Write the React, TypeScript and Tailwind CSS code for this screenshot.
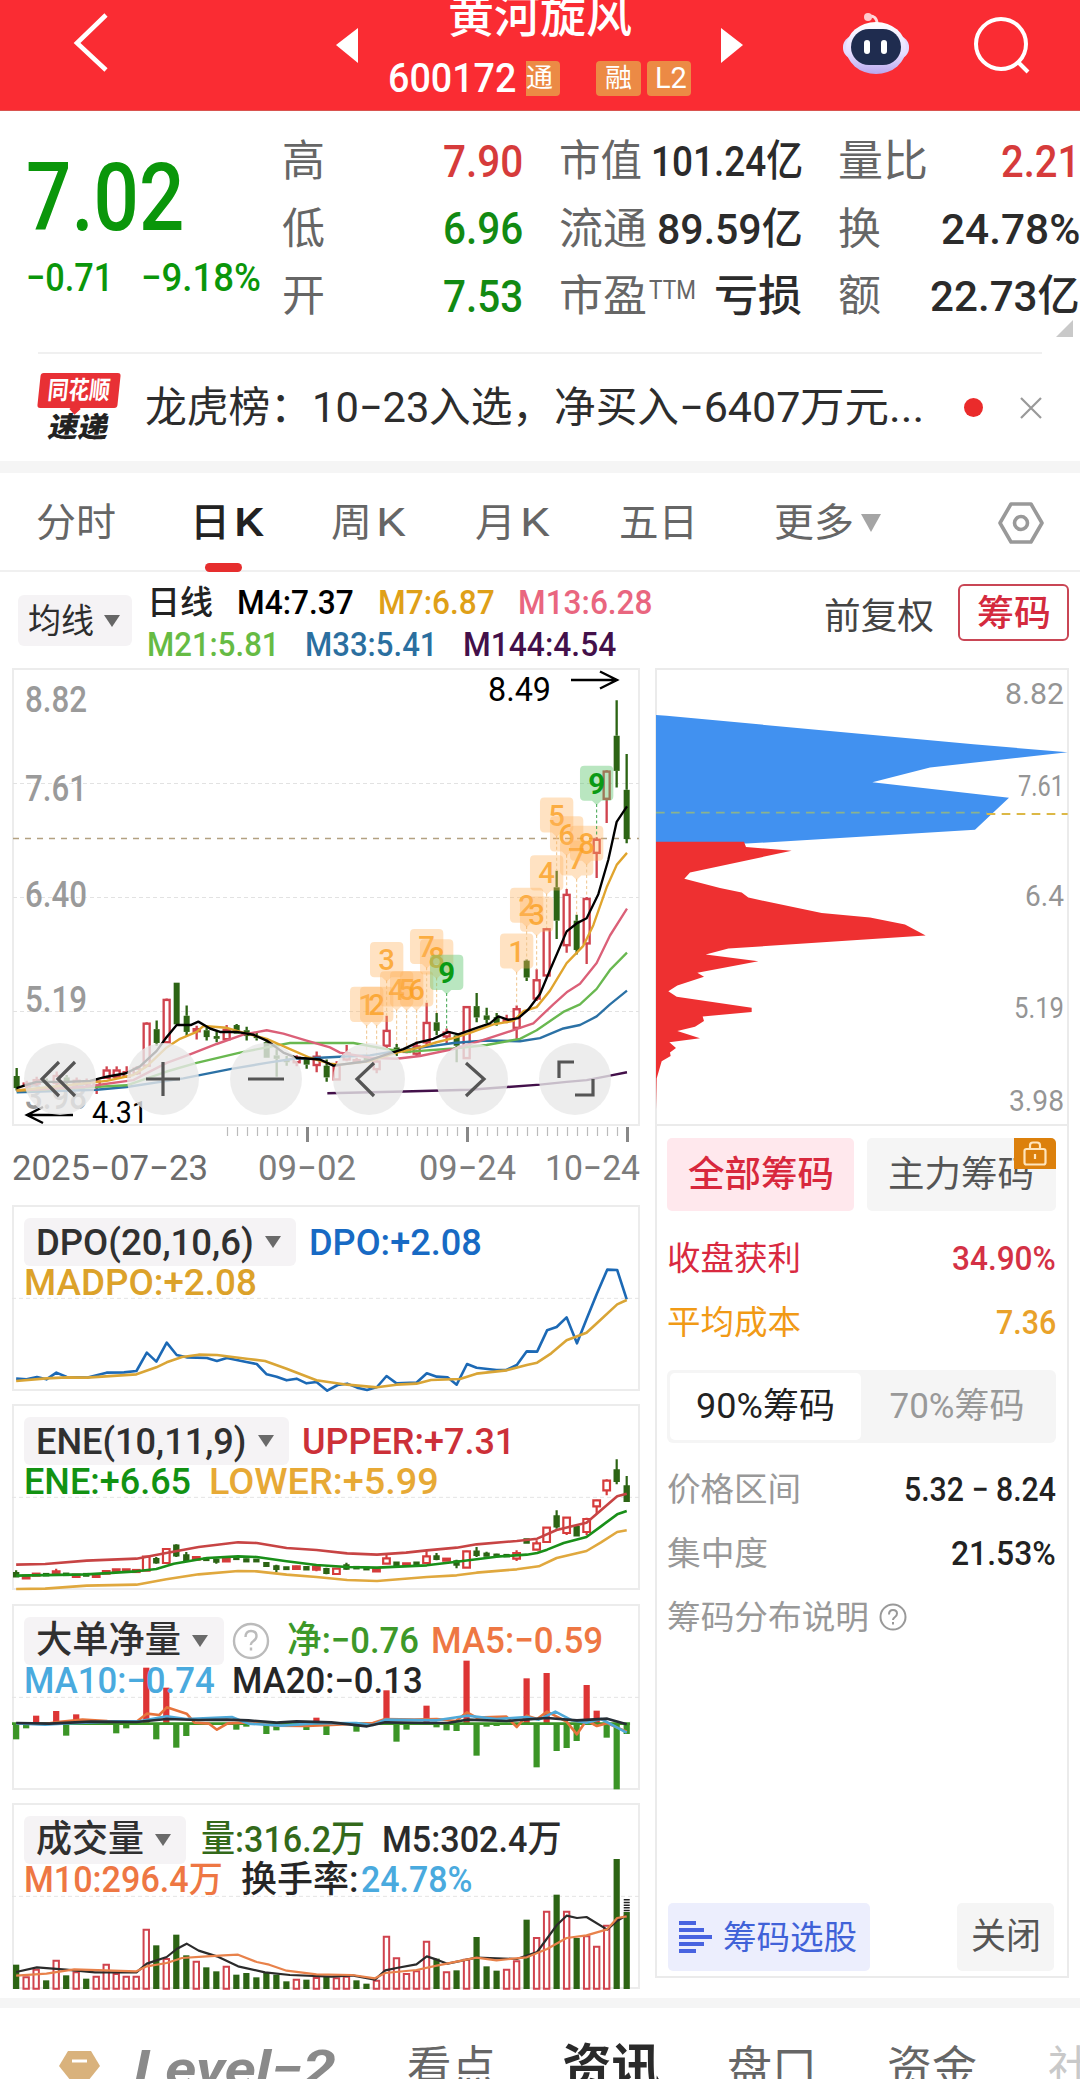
import React, { useLayoutEffect, useRef, useState } from "react";

const GREEN = "#2c6414";
const RED = "#d0434e";

/** Text condensed or stretched horizontally to an exact width. */
function Fit({ w, className = "", children }: { w: number; className?: string; children: React.ReactNode }) {
  const ref = useRef<HTMLSpanElement>(null);
  const [s, setS] = useState(1);
  useLayoutEffect(() => {
    if (ref.current) setS(w / ref.current.offsetWidth);
  }, [w]);
  return (
    <span className={"block shrink-0 leading-none " + className} style={{ width: w }}>
      <span ref={ref} className="inline-block origin-left whitespace-nowrap" style={{ transform: `scaleX(${s})` }}>
        {children}
      </span>
    </span>
  );
}

function Header() {
  return (
    <header className="flex h-[111px] shrink-0 overflow-hidden border-b border-[#d9534f] bg-[#fa2c33] text-white">
      <svg className="ml-[72px] mt-[10px] h-[64px] w-[40px]" viewBox="0 0 40 64" fill="none" stroke="white" strokeWidth="4.6">
        <path d="M34 5 5 33l29 27" />
      </svg>
      <svg className="ml-[224px] mt-[28px] h-[35px] w-[22px]" viewBox="0 0 22 35" fill="white">
        <path d="M22 0v35L0 17z" />
      </svg>
      <div className="ml-[28px] w-[308px]">
        <div className="-mt-[9px] flex h-[50px] items-center pl-[62px]">
          <Fit w={184} className="text-[46px] font-medium">黄河旋风</Fit>
        </div>
        <div className="mt-[19px] flex h-[36px] items-center">
          <Fit w={128} className="ml-[2px] mt-[2px] text-[40px] font-medium">600172</Fit>
          <div className="ml-[10px] flex h-[35px] w-[34px] items-center rounded-r-[4px] bg-[#ec8a45]">
            <Fit w={27} className="text-[26px]">通</Fit>
          </div>
          <div className="ml-[36px] flex h-[35px] w-[45px] items-center justify-center rounded-[4px] bg-[#ec8a45]">
            <Fit w={27} className="text-[26px]">融</Fit>
          </div>
          <div className="ml-[6px] flex h-[35px] w-[44px] items-center justify-center rounded-[4px] bg-[#ec8a45]">
            <Fit w={32} className="ml-1 text-[29px]">L2</Fit>
          </div>
        </div>
      </div>
      <svg className="ml-[27px] mt-[28px] h-[35px] w-[22px]" viewBox="0 0 22 35" fill="white">
        <path d="M0 0v35l22-18z" />
      </svg>
      <svg className="ml-[99px] mt-[12px] h-[64px] w-[68px]" viewBox="0 0 68 64">
        <defs>
          <linearGradient id="shell" x1="0" y1="0" x2="0" y2="1">
            <stop offset="0" stopColor="#ffffff" />
            <stop offset="0.6" stopColor="#e6ddff" />
            <stop offset="1" stopColor="#b9a7ee" />
          </linearGradient>
        </defs>
        <path d="M26 4q9-1 9 8" fill="none" stroke="#ffd9dc" strokeWidth="3" />
        <circle cx="26" cy="5" r="4" fill="#ffc9cd" />
        <rect x="1" y="24" width="66" height="23" rx="11" fill="#e4dbff" />
        <ellipse cx="34" cy="36" rx="30" ry="26" fill="url(#shell)" />
        <rect x="9" y="17" width="50" height="36" rx="18" fill="#1f2c4f" />
        <rect x="22" y="28" width="6" height="14" rx="3" fill="white" />
        <rect x="39" y="28" width="6" height="14" rx="3" fill="white" />
      </svg>
      <svg className="ml-[63px] mt-[15px] h-[60px] w-[60px]" viewBox="0 0 60 60" fill="none" stroke="white" strokeWidth="4">
        <circle cx="28" cy="29" r="25" />
        <path d="m45 47 10 10" />
      </svg>
    </header>
  );
}

function Quote() {
  const lab = "text-[43px] text-[#666]";
  const val = "text-[43px] font-medium text-[#2b2b2b]";
  return (
    <section className="relative flex h-[241px] shrink-0">
      <div className="ml-[26px] w-[256px] text-[#0a960a]">
        <div className="mt-[40px] flex h-[94px] items-center">
          <Fit w={158} className="text-[94px] font-medium">7.02</Fit>
        </div>
        <div className="mt-[13px] flex h-[40px] items-center">
          <Fit w={87} className="text-[39px] font-medium">−0.71</Fit>
          <Fit w={120} className="ml-[28px] text-[39px] font-medium">−9.18%</Fit>
        </div>
      </div>
      <div className="mt-[17px] flex w-[241px] flex-col">
        {[["高", "7.90", "text-[#d63b3b]"], ["低", "6.96", "text-[#128a12]"], ["开", "7.53", "text-[#128a12]"]].map(([a, b, c]) => (
          <div key={a} className="flex h-[67.5px] items-center justify-between">
            <Fit w={43} className={lab}>{a}</Fit>
            <Fit w={80} className={"text-[44px] font-medium " + c}>{b}</Fit>
          </div>
        ))}
      </div>
      <div className="ml-[36px] mt-[17px] flex w-[244px] flex-col">
        <div className="flex h-[67.5px] items-center justify-between">
          <Fit w={83} className={lab}>市值</Fit><Fit w={152} className={val}>101.24亿</Fit>
        </div>
        <div className="flex h-[67.5px] items-center justify-between">
          <Fit w={88} className={lab}>流通</Fit><Fit w={146} className={val}>89.59亿</Fit>
        </div>
        <div className="flex h-[67.5px] items-center">
          <Fit w={88} className={lab}>市盈</Fit>
          <Fit w={47} className="-mt-3 ml-[2px] text-[25px] text-[#666]">TTM</Fit>
          <Fit w={88} className={"ml-[18px] " + val}>亏损</Fit>
        </div>
      </div>
      <div className="ml-[35px] mt-[17px] flex w-[242px] flex-col">
        <div className="flex h-[67.5px] items-center justify-between">
          <Fit w={90} className={lab}>量比</Fit><Fit w={79} className="text-[44px] font-medium text-[#d63b3b]">2.21</Fit>
        </div>
        <div className="flex h-[67.5px] items-center justify-between">
          <Fit w={43} className={lab}>换</Fit><Fit w={139} className={val}>24.78%</Fit>
        </div>
        <div className="flex h-[67.5px] items-center justify-between">
          <Fit w={43} className={lab}>额</Fit><Fit w={150} className={val}>22.73亿</Fit>
        </div>
      </div>
      <svg className="absolute bottom-[15px] right-[7px] h-[17px] w-[17px]" viewBox="0 0 17 17" fill="#c9c9c9">
        <path d="M17 0v17H0z" />
      </svg>
    </section>
  );
}

function News() {
  return (
    <section className="mx-[38px] flex h-[109px] shrink-0 items-center border-t-2 border-[#f0f0f0]">
      <div className="flex h-[70px] w-[82px] flex-col items-center">
        <div className="relative flex h-[35px] w-[80px] -skew-x-6 items-center justify-center rounded-[3px] bg-[#e83035] text-white">
          <Fit w={62} className="text-[25px] font-bold">同花顺</Fit>
          <div className="absolute left-[34px] top-[32px] h-[8px] w-[8px] rotate-45 bg-[#e83035]" />
        </div>
        <Fit w={60} className="mt-[6px] -skew-x-12 text-[28px] font-black text-[#222]">速递</Fit>
      </div>
      <div className="ml-[25px] flex text-[42px] text-[#2d2d2d]">
        <Fit w={167}>龙虎榜：</Fit>
        <Fit w={117}>10−23</Fit>
        <Fit w={125}>入选，</Fit>
        <Fit w={125}>净买入</Fit>
        <Fit w={121}>−6407</Fit>
        <Fit w={124}>万元...</Fit>
      </div>
      <span className="ml-[40px] h-[19px] w-[19px] rounded-full bg-[#ea2b2b]" />
      <svg className="ml-[37px] h-[22px] w-[22px]" viewBox="0 0 22 22" stroke="#999" strokeWidth="2.2">
        <path d="M1 1l20 20M21 1 1 21" />
      </svg>
    </section>
  );
}

function Tabs() {
  const t = "text-[39px] text-[#666]";
  return (
    <nav className="flex h-[99px] shrink-0 items-center border-b-2 border-[#f0f0f0] pt-[3px]">
      <Fit w={80} className={"ml-[36px] " + t}>分时</Fit>
      <div className="relative ml-[74px]">
        <div className="flex text-[39px] font-medium text-[#222]">
          <Fit w={40}>日</Fit>
          <Fit w={30} className="ml-[4px]">K</Fit>
        </div>
        <span className="absolute -bottom-[29px] left-[15px] h-[9px] w-[37px] rounded-full bg-[#e62e2e]" />
      </div>
      <Fit w={41} className={"ml-[67px] " + t}>周</Fit>
      <Fit w={29} className={"ml-[4px] " + t}>K</Fit>
      <Fit w={41} className={"ml-[70px] " + t}>月</Fit>
      <Fit w={29} className={"ml-[4px] " + t}>K</Fit>
      <Fit w={79} className={"ml-[70px] " + t}>五日</Fit>
      <Fit w={80} className={"ml-[76px] " + t}>更多</Fit>
      <svg className="ml-[7px] h-[18px] w-[20px]" viewBox="0 0 20 18" fill="#a5a5a5"><path d="M0 0h20L10 18z" /></svg>
      <svg className="ml-[117px] h-[44px] w-[46px]" viewBox="0 0 46 44" fill="none" stroke="#999" strokeWidth="3.6" strokeLinejoin="round">
        <path d="M13 3h20l11 19-11 19H13L2 22z" />
        <circle cx="23" cy="22" r="6.5" />
      </svg>
    </nav>
  );
}

function Averages() {
  return (
    <section className="flex h-[96px] shrink-0">
      <div className="ml-[18px] mt-[23px] flex h-[51px] w-[114px] items-center rounded-[6px] bg-[#f5f3f5]">
        <Fit w={66} className="ml-[10px] text-[34px] text-[#2d2d2d]">均线</Fit>
        <svg className="ml-[10px] h-[12px] w-[16px]" viewBox="0 0 16 12" fill="#666"><path d="M0 0h16L8 12z" /></svg>
      </div>
      <div className="ml-[15px] mt-[9px] w-[530px]">
        <div className="flex h-[42px] items-center text-[33px] font-medium">
          <Fit w={66} className="text-[#222]">日线</Fit>
          <Fit w={117} className="ml-[24px] text-black">M4:7.37</Fit>
          <Fit w={117} className="ml-[24px] text-[#dfa018]">M7:6.87</Fit>
          <Fit w={135} className="ml-[23px] text-[#e9667f]">M13:6.28</Fit>
        </div>
        <div className="flex h-[42px] items-center text-[33px] font-medium">
          <Fit w={133} className="text-[#66bb44]">M21:5.81</Fit>
          <Fit w={133} className="ml-[25px] text-[#2b6f9f]">M33:5.41</Fit>
          <Fit w={153} className="ml-[25px] text-[#43104a]">M144:4.54</Fit>
        </div>
      </div>
      <Fit w={110} className="ml-[147px] mt-[27px] text-[36px] text-[#444]">前复权</Fit>
      <div className="ml-[24px] mt-[12px] flex h-[57px] w-[111px] items-center justify-center rounded-[6px] border-2 border-[#c94655]">
        <Fit w={74} className="mt-[2px] text-[36px] font-medium text-[#d42a3e]">筹码</Fit>
      </div>
    </section>
  );
}

type Candle = [number, number, number, number, "r" | "g"];
const candles: Candle[] = [
  [1185, 1208, 1243, 1250, "g"], [1222, 1228, 1238, 1245, "r"], [1210, 1218, 1232, 1236, "r"], [1215, 1222, 1230, 1236, "g"],
  [1195, 1206, 1230, 1240, "r"], [1205, 1212, 1228, 1232, "g"], [1212, 1220, 1232, 1236, "r"], [1215, 1222, 1232, 1238, "r"],
  [1215, 1222, 1240, 1260, "r"], [1180, 1190, 1215, 1215, "r"], [1180, 1190, 1212, 1212, "r"], [1180, 1195, 1212, 1214, "r"],
  [1180, 1185, 1202, 1205, "r"], [1052, 1054, 1180, 1180, "r"], [1047, 1072, 1112, 1120, "g"], [983, 985, 1112, 1112, "r"],
  [937, 937, 1058, 1058, "g"], [1003, 1033, 1080, 1092, "g"], [1062, 1070, 1080, 1102, "r"], [1065, 1075, 1095, 1105, "g"],
  [1078, 1092, 1100, 1110, "g"], [1060, 1072, 1103, 1103, "r"], [1057, 1060, 1085, 1085, "g"], [1065, 1075, 1092, 1105, "g"],
  [1080, 1092, 1098, 1105, "g"], [1098, 1110, 1155, 1155, "g"], [1130, 1148, 1158, 1210, "g"], [1150, 1160, 1168, 1178, "g"],
  [1148, 1153, 1170, 1180, "r"], [1150, 1158, 1175, 1187, "g"], [1137, 1150, 1178, 1197, "r"], [1160, 1178, 1212, 1225, "g"],
  [1165, 1175, 1220, 1220, "r"], [1118, 1140, 1162, 1165, "r"], [1155, 1160, 1170, 1172, "r"], [1150, 1155, 1162, 1166, "g"],
  [1158, 1164, 1190, 1200, "r"], [1033, 1075, 1122, 1127, "r"], [1115, 1125, 1140, 1150, "g"], [1125, 1132, 1140, 1142, "r"],
  [1108, 1120, 1145, 1150, "r"], [995, 1052, 1112, 1125, "r"], [1025, 1052, 1077, 1090, "g"], [1070, 1080, 1095, 1118, "r"],
  [1085, 1090, 1120, 1168, "g"], [1005, 1006, 1158, 1158, "r"], [967, 1005, 1038, 1052, "g"], [1010, 1032, 1045, 1055, "g"],
  [1025, 1037, 1055, 1062, "g"], [1030, 1042, 1050, 1055, "r"], [1003, 1012, 1070, 1103, "r"], [870, 873, 922, 932, "g"],
  [898, 928, 985, 990, "r"], [778, 780, 918, 918, "r"], [612, 660, 757, 810, "g"], [665, 680, 830, 850, "r"],
  [740, 757, 842, 855, "g"], [688, 692, 825, 883, "r"], [515, 520, 562, 633, "r"], [320, 322, 405, 473, "r"],
  [117, 220, 322, 370, "g"], [273, 377, 520, 532, "g"],
];

const maLines: [string, string][] = [
  ["#2b71a5", "50,1255 290,1248 380,1240 550,1215 690,1188 800,1170 880,1158 960,1155 1020,1152 1110,1148 1190,1135 1290,1122 1360,1112 1460,1105 1560,1107 1620,1098 1690,1070 1740,1060 1790,1035 1830,1000 1881,960"],
  ["#69b850", "50,1252 380,1235 500,1195 590,1170 720,1140 800,1125 870,1112 960,1112 1060,1112 1160,1130 1220,1138 1360,1128 1460,1118 1560,1100 1610,1075 1690,1022 1740,1000 1790,955 1830,900 1881,850"],
  ["#db6078", "50,1250 250,1240 400,1220 500,1170 570,1145 650,1115 730,1088 800,1075 850,1085 920,1105 990,1125 1020,1140 1110,1155 1190,1158 1260,1150 1360,1130 1460,1100 1540,1075 1600,1055 1660,1000 1700,965 1740,940 1790,880 1830,800 1881,722"],
  ["#e0a42d", "50,1250 200,1235 320,1222 400,1205 440,1180 500,1125 540,1100 590,1080 610,1063 680,1068 740,1085 800,1100 870,1130 930,1155 990,1172 1020,1175 1110,1165 1190,1140 1260,1125 1310,1110 1360,1098 1410,1083 1480,1058 1540,1048 1570,1020 1610,1008 1650,960 1700,880 1750,830 1780,770 1820,660 1850,595 1881,560"],
  ["#000000", "50,1243 75,1235 110,1225 200,1225 270,1222 320,1210 378,1200 420,1180 470,1135 500,1095 530,1060 572,1060 595,1050 630,1070 660,1080 710,1080 760,1088 800,1105 850,1140 890,1155 960,1160 1000,1178 1100,1165 1160,1145 1210,1130 1250,1112 1300,1100 1345,1080 1375,1087 1430,1068 1470,1055 1495,1035 1525,1045 1555,1040 1585,1015 1620,970 1650,900 1700,788 1730,765 1760,750 1795,680 1825,580 1850,470 1881,425"],
  ["#43104a", "982,1258 1210,1253 1410,1248 1520,1240 1620,1233 1700,1225 1760,1220 1830,1207 1881,1197"],
];

const marks: [string, number, number][] = [
  ["1", 1100, 1000], ["2", 1130, 1000], ["3", 1160, 870], ["4", 1190, 955], ["5", 1220, 955], ["6", 1250, 955],
  ["7", 1280, 832], ["8", 1310, 862], ["9", 1340, 907], ["1", 1550, 845], ["2", 1580, 712], ["3", 1610, 738],
  ["4", 1640, 618], ["5", 1670, 450], ["6", 1700, 505], ["7", 1730, 575], ["8", 1760, 532], ["9", 1790, 358],
];

function Label({ x, y, w, size, fill, children, end }: { x: number; y: number; w: number; size: number; fill: string; children: string; end?: boolean }) {
  return (
    <text x={end ? x - w : x} y={y} textLength={w} lengthAdjust="spacingAndGlyphs" fontSize={size} fill={fill}>
      {children}
    </text>
  );
}

function PriceChart() {
  const round = "flex h-[72px] w-[72px] items-center justify-center rounded-full bg-[#e9e9e9]/80";
  return (
    <div className="relative h-[522px] w-[628px]">
      <svg className="h-[522px] w-[632px] overflow-visible" viewBox="12 668 632 522">
        <rect x="13" y="669" width="626" height="456" fill="none" stroke="#ececec" strokeWidth="2" />
        <path d="M13 783.500h626M13 897.500h626M13 1011.500h626" stroke="#e2e2e2" strokeDasharray="4 3" />
        <path d="M13 838.500h626" stroke="#b3a181" strokeWidth="1.6" strokeDasharray="6 6" />
        <g fontWeight="500">
          <Label x={25} y={712} w={62} size={36} fill="#9a9a9a">8.82</Label>
          <Label x={25} y={801} w={62} size={36} fill="#9a9a9a">7.61</Label>
          <Label x={25} y={907} w={62} size={36} fill="#9a9a9a">6.40</Label>
          <Label x={25} y={1012} w={62} size={36} fill="#9a9a9a">5.19</Label>
          <Label x={25} y={1109} w={62} size={36} fill="#9a9a9a">3.98</Label>
        </g>
        <g transform="translate(0 660) scale(.33333 .34438)">
          {candles.map(([h, t, b, l, c], i) => {
            const x = 50 + 30 * i;
            const col = c === "g" ? GREEN : "#d0434e";
            return (
              <g key={i} stroke={col} strokeWidth="7">
                <path d={`M${x} ${h}V${t}M${x} ${b}V${l}`} />
                {c === "g"
                  ? <rect x={x - 9} y={t} width="18" height={b - t} fill={col} stroke="none" />
                  : <rect x={x - 9} y={t + 2} width="18" height={Math.max(b - t - 4, 2)} fill="white" />}
              </g>
            );
          })}
          {marks.map(([n, x, y], i) => {
            const g = n === "9";
            const top = candles[Math.round((x - 50) / 30)][0];
            return (
              <g key={i}>
                <path d={`M${x} ${y + 60}V${top}`} stroke={g ? "#3da34b" : "#efc48c"} strokeWidth="3" strokeDasharray="9 7" />
                <path
                  d={`M${x - 37} ${y - 51}h74q13 0 13 13v76q0 13-13 13h-23l-14 13-14-13h-23q-13 0-13-13v-76q0-13 13-13z`}
                  fill={g ? "#58c468" : "#ffb45e"}
                  fillOpacity={g ? 0.42 : 0.38}
                />
                <text x={x} y={y + 31} textAnchor="middle" fontSize="88" fontWeight={g ? 700 : 500} fill={g ? "#0a9a14" : "#fb9f1e"} fillOpacity={g ? 1 : 0.8}>{n}</text>
              </g>
            );
          })}
          {maLines.map(([c, p]) => <polyline key={c} points={p} fill="none" stroke={c} strokeWidth="7" strokeLinejoin="round" />)}
        </g>
        <Label x={488} y={701} w={63} size={33} fill="#000">8.49</Label>
        <path d="M571 680h45M600 671.500l17 8.500-17 8.500" fill="none" stroke="#000" strokeWidth="2.4" />
        <Label x={92} y={1123} w={56} size={32} fill="#000">4.31</Label>
        <path d="M73 1115H28M43 1107l-16 8 16 8" fill="none" stroke="#000" strokeWidth="2.4" />
        <g stroke="#bbb" strokeWidth="1.2">
          {Array.from({ length: 41 }, (_, i) => <path key={i} d={`M${227.5 + i * 10} 1127v9`} />)}
        </g>
        <path d="M307.500 1127v15M467.500 1127v15M627.500 1127v15" stroke="#888" strokeWidth="3" />
        <Label x={12} y={1180} w={196} size={35} fill="#6c6c6c">2025−07−23</Label>
        <Label x={258} y={1180} w={98} size={35} fill="#7c7c7c">09−02</Label>
        <Label x={419} y={1180} w={97} size={35} fill="#7c7c7c">09−24</Label>
        <Label x={545} y={1180} w={95} size={35} fill="#7c7c7c">10−24</Label>
      </svg>
      <div className="absolute left-[12px] top-[375px] flex gap-[31px]">
        {["M35 19 18 36l17 17M51 19 34 36l17 17", "M36 19v34M19 36h34", "M18 36h36", "M41 20 24 36l17 17", "M30 20l18 16-18 17", "M35 19H20v16M36 52h18V36"].map((d) => (
          <button key={d} className={round}>
            <svg className="h-[72px] w-[72px]" viewBox="0 0 72 72" fill="none" stroke="#555" strokeWidth="3.2"><path d={d} /></svg>
          </button>
        ))}
      </div>
    </div>
  );
}

function Panel({ y, children, chart }: { y: number; children: React.ReactNode; chart: React.ReactNode }) {
  return (
    <div className="relative h-[186px] w-[628px] border-2 border-[#ececec]">
      <svg className="absolute -left-[2px] -top-[2px] h-[186px] w-[628px] overflow-visible [&_*]:[vector-effect:non-scaling-stroke]" viewBox={`30 ${y} 1514 558`} preserveAspectRatio="none">
        <path d={`M30 ${y + 280}h1514`} stroke="#e4e4e4" strokeDasharray="4 3" />
        {chart}
      </svg>
      <div className="relative pt-[11px]">{children}</div>
    </div>
  );
}

function Name({ boxW, w, children }: { boxW: number; w: number; children: string }) {
  return (
    <div className="ml-[10px] flex h-[48px] shrink-0 items-center rounded-[6px] bg-[#f5f3f5]" style={{ width: boxW }}>
      <Fit w={w} className="ml-[12px] text-[37px] font-medium text-[#303030]">{children}</Fit>
      <svg className="ml-[11px] h-[12px] w-[16px]" viewBox="0 0 16 12" fill="#6a6a6a"><path d="M0 0h16L8 12z" /></svg>
    </div>
  );
}

const px = (i: number) => 40 + 24.13 * i;
const line = (c: string, p: string, w = 2.6) => <polyline points={p} fill="none" stroke={c} strokeWidth={w} strokeLinejoin="round" />;

const eneCandles: [number, number, number, number, number, "r" | "g"][] = [
  [0, 530, 538, 548, 550, "g"], [1, 546, 546, 554, 554, "r"], [2, 538, 540, 546, 547, "r"], [3, 541, 541, 545, 545, "g"], [4, 525, 533, 542, 547, "r"], [5, 540, 540, 544, 544, "g"],
  [6, 543, 543, 550, 550, "r"], [7, 541, 541, 546, 546, "g"], [8, 543, 543, 550, 550, "r"], [9, 532, 532, 540, 540, "r"], [10, 527, 527, 535, 535, "r"],
  [11, 527, 527, 535, 535, "r"], [12, 527, 529, 535, 535, "r"], [13, 487, 489, 531, 531, "r"], [14, 490, 496, 506, 510, "g"], [15, 464, 466, 508, 508, "r"],
  [16, 452, 456, 485, 490, "g"], [17, 475, 485, 500, 503, "g"], [18, 490, 490, 498, 498, "r"], [19, 495, 495, 499, 499, "g"], [20, 495, 498, 504, 510, "g"],
  [21, 492, 494, 503, 503, "r"], [22, 491, 491, 496, 496, "g"], [23, 495, 497, 503, 503, "g"], [24, 498, 498, 503, 503, "g"], [25, 505, 508, 517, 517, "g"],
  [26, 513, 518, 526, 536, "g"], [27, 521, 521, 526, 526, "g"], [28, 516, 518, 526, 526, "r"], [29, 520, 520, 527, 527, "g"], [30, 512, 519, 528, 533, "r"],
  [31, 522, 526, 538, 542, "g"], [32, 523, 525, 541, 541, "r"], [33, 507, 515, 525, 528, "g"], [34, 520, 520, 524, 524, "g"], [35, 522, 522, 527, 527, "g"],
  [36, 525, 525, 533, 533, "r"], [37, 478, 494, 510, 510, "r"], [38, 507, 507, 514, 514, "g"], [39, 509, 509, 515, 515, "r"], [40, 507, 507, 514, 514, "g"],
  [41, 470, 488, 508, 508, "r"], [42, 478, 488, 496, 500, "g"], [43, 495, 495, 501, 501, "r"], [44, 498, 503, 513, 524, "g"], [45, 471, 473, 522, 522, "r"],
  [46, 460, 474, 484, 490, "g"], [47, 474, 480, 486, 488, "g"], [48, 480, 483, 487, 490, "g"], [49, 484, 484, 488, 488, "g"], [50, 470, 478, 495, 502, "r"],
  [51, 437, 437, 447, 447, "g"], [52, 440, 449, 468, 470, "r"], [53, 400, 402, 445, 448, "r"], [54, 350, 368, 398, 405, "g"], [55, 370, 372, 418, 424, "r"],
  [56, 395, 400, 425, 427, "g"], [57, 372, 376, 415, 425, "r"], [58, 318, 320, 338, 360, "r"], [59, 257, 261, 290, 305, "r"], [60, 197, 230, 262, 272, "g"], [61, 247, 278, 322, 325, "g"],
];

const flow: [number, number][] = [
  [0, 433], [1, 400], [2, 362], [4, 348], [5, 422], [6, 358], [10, 415], [11, 400], [13, 218], [14, 433], [15, 278], [16, 458], [17, 423],
  [22, 404], [23, 395], [25, 417], [26, 406], [29, 405], [30, 368], [31, 420], [34, 410], [37, 286], [38, 440], [39, 404], [41, 332],
  [42, 397], [43, 406], [44, 408], [45, 197], [46, 482], [47, 395], [48, 393], [51, 250], [52, 517], [53, 234], [54, 468], [55, 459],
  [56, 438], [57, 270], [58, 347], [59, 428], [60, 583], [61, 417],
];

const volume = "g510 r545 r522 g557 r495 g542 r530 g552 r543 r507 r535 r543 r543 r402 g452 r490 g420 g482 r498 g518 g530 r513 g540 g535 g548 g535 g540 g560 r552 g555 r547 g547 r548 r543 g557 g567 r555 r423 r488 r535 r527 r438 g492 r530 g527 r492 g427 g515 g528 r522 r497 g375 r427 r348 g300 r348 g430 r422 r453 r390 g193 g352"
  .split(" ")
  .map((v) => [v[0], Number(v.slice(1))] as [string, number]);

function Indicators() {
  const row2 = "flex h-[37px] -mt-[2px] items-center pl-[10px] text-[36px] font-medium";
  const row1 = "flex items-center text-[37px] font-medium";
  return (
    <div className="flex flex-col gap-[13.300px]">
      <Panel y={47} chart={<>
        {line("#1c69b5", "40,568 65,570 90,563 113,570 137,550 162,563 210,565 258,550 300,549 330,545 355,490 378,517 403,460 427,497 451,504 500,506 524,515 548,506 595,518 620,524 644,555 668,562 692,573 716,568 740,582 764,578 790,604 815,587 838,583 862,595 886,602 910,593 933,560 957,582 1005,580 1030,552 1054,562 1080,564 1102,586 1127,524 1150,535 1198,542 1222,542 1247,527 1271,486 1296,487 1320,423 1343,413 1367,384 1392,462 1415,390 1440,313 1465,241 1489,242 1512,330")}
        {line("#d9a536", "40,575 113,567 162,564 210,565 330,555 378,534 403,519 440,503 480,496 524,497 600,509 640,515 692,538 764,573 838,586 910,594 957,586 1005,583 1040,572 1110,569 1150,553 1222,543 1271,527 1296,520 1330,492 1367,453 1415,430 1440,402 1489,345 1512,332")}
      </>}>
        <div className={row1}>
          <Name boxW={272} w={218}>DPO(20,10,6)</Name>
          <Fit w={173} className="ml-[13px] text-[#176ac4]">DPO:+2.08</Fit>
        </div>
        <div className={row2}><Fit w={233} className="text-[#dca22a]">MADPO:+2.08</Fit></div>
      </Panel>
      <Panel y={31} chart={<>
        {eneCandles.map(([i, h, t, b, l, c]) => (
          <g key={i} stroke={c === "g" ? GREEN : "#d63b3b"} strokeWidth="2.2">
            <path d={`M${px(i)} ${h}V${t}M${px(i)} ${b}V${l}`} />
            <rect x={px(i) - (c === "g" ? 5 : 8)} y={t} width={c === "g" ? 10 : 16} height={b - t} fill={c === "g" ? GREEN : b - t < 12 ? "#b8473c" : "white"} />
          </g>
        ))}
        {line("#c74444", "40,513 110,511 210,501 330,495 402,478 480,460 575,446 620,448 692,463 764,469 838,479 910,483 980,477 1030,470 1102,462 1150,452 1247,442 1296,435 1343,409 1415,387 1440,360 1489,308 1512,300")}
        {line("#198f19", "40,546 210,542 330,533 378,526 420,510 500,493 575,488 620,490 692,503 764,514 838,520 910,522 1030,515 1102,504 1198,489 1271,483 1296,478 1320,468 1360,448 1415,430 1450,398 1489,362 1512,352")}
        {line("#e0a83e", "40,586 110,585 210,576 330,573 402,557 480,542 575,532 620,533 692,543 764,550 838,559 910,562 1030,550 1102,545 1150,537 1247,527 1300,518 1343,493 1415,472 1450,446 1489,415 1512,410")}
      </>}>
        <div className={row1}>
          <Name boxW={265} w={211}>ENE(10,11,9)</Name>
          <Fit w={213} className="ml-[13px] text-[#cc3038]">UPPER:+7.31</Fit>
        </div>
        <div className={row2}>
          <Fit w={167} className="text-[#129212]">ENE:+6.65</Fit>
          <Fit w={230} className="ml-[18px] text-[#e7a935]">LOWER:+5.99</Fit>
        </div>
      </Panel>
      <Panel y={27} chart={<>
        {flow.map(([i, v]) => <rect key={i} x={px(i) - 7.500} y={Math.min(386, v)} width="15" height={Math.abs(v - 386)} fill={v > 386 ? "#3b9526" : "#dd3535"} />)}
        {line("#3b9526", "30,386 1520,386")}
        {line("#e6733c", "40,385 110,387 140,381 200,374 260,378 330,380 355,356 385,360 403,337 451,356 470,383 505,386 524,404 550,385 600,382 668,392 740,393 800,390 900,384 930,372 1000,374 1054,372 1100,378 1127,352 1150,368 1222,365 1247,396 1271,362 1296,372 1320,350 1367,380 1392,418 1415,376 1440,393 1465,385 1512,410")}
        {line("#4fa9d8", "40,385 110,389 150,386 280,379 340,378 403,364 450,372 560,366 600,386 680,392 760,385 860,384 900,390 930,374 1054,376 1127,362 1198,372 1270,366 1300,374 1340,350 1380,376 1415,383 1450,372 1512,413")}
        {line("#262d35", "40,384 120,386 220,380 330,381 403,372 480,375 548,374 600,376 668,383 716,379 800,382 886,394 930,382 1030,384 1080,384 1127,374 1222,378 1320,369 1392,376 1465,371 1512,388")}
      </>}>
        <div className={row1}>
          <Name boxW={200} w={145}>大单净量</Name>
          <svg className="ml-[8px] h-[38px] w-[38px]" viewBox="0 0 38 38" fill="none" stroke="#bbb" strokeWidth="2.4">
            <circle cx="19" cy="19" r="17" /><path d="M13.500 15q0-6 5.500-6t5.500 5q0 3-3 5t-2.500 4M19 25.500v3" />
          </svg>
          <Fit w={132} className="ml-[17px] text-[#3d9829]">净:−0.76</Fit>
          <Fit w={172} className="ml-[12px] text-[#ee7743]">MA5:−0.59</Fit>
        </div>
        <div className={row2}>
          <Fit w={191} className="text-[#4aaade]">MA10:−0.74</Fit>
          <Fit w={191} className="ml-[17px] text-[#262626]">MA20:−0.13</Fit>
        </div>
      </Panel>
      <Panel y={25} chart={<>
        {volume.map(([c, v], i) => c === "g"
          ? <rect key={i} x={px(i) - 7.500} y={v} width="15" height={583 - v} fill={GREEN} />
          : <rect key={i} x={px(i) - 6.500} y={v + 3} width="13" height={579 - v} fill="white" stroke={RED} strokeWidth="2" />)}
        <path d="M1512 313v40" stroke="#222" strokeWidth="6" strokeDasharray="1.500 1.200" />
        {line("#2b2b2b", "40,532 90,518 160,525 230,533 330,533 355,507 403,487 427,463 451,447 480,468 524,485 575,515 640,533 700,541 800,546 850,542 905,555 930,527 957,520 1005,509 1030,485 1054,495 1080,507 1150,489 1247,493 1296,472 1343,392 1367,363 1392,370 1415,367 1465,405 1489,378 1512,362", 2.2)}
        {line("#e8824b", "40,543 113,537 180,524 330,530 355,515 403,505 440,490 490,486 540,482 575,480 620,502 650,510 692,528 764,539 850,541 905,551 930,535 1005,526 1054,513 1150,489 1198,497 1271,488 1320,463 1367,430 1415,422 1465,404 1489,370 1512,365", 2.2)}
      </>}>
        <div className={row1}>
          <Name boxW={162} w={108}>成交量</Name>
          <Fit w={164} className="ml-[15px] text-[#33691a]">量:316.2万</Fit>
          <Fit w={180} className="ml-[17px] text-[#2b2b2b]">M5:302.4万</Fit>
        </div>
        <div className={row2}>
          <Fit w={199} className="text-[#ee7743]">M10:296.4万</Fit>
          <Fit w={118} className="ml-[18px] text-[#262626]">换手率:</Fit>
          <Fit w={111} className="ml-[2px] text-[#4aaade]">24.78%</Fit>
        </div>
      </Panel>
    </div>
  );
}

function InfoRow({ a, aw, b, bw, c, d }: { a: string; aw: number; b: string; bw: number; c: string; d: string }) {
  return (
    <div className="flex h-[64px] items-center justify-between">
      <Fit w={aw} className={"text-[33px] " + c}>{a}</Fit>
      <Fit w={bw} className={"text-[34px] font-medium " + d}>{b}</Fit>
    </div>
  );
}

function Chips() {
  return (
    <aside className="flex h-[1310px] w-[414px] flex-col border-2 border-[#ebebeb]">
      <svg className="-ml-[2px] -mt-[2px] h-[460px] w-[414px] shrink-0" viewBox="655 668 414 460">
        <g transform="translate(640 660) scale(.33333 .34438)">
          <path fill="#4191f0" d="M48 160 80 162 1000 245 1283 268 870 312 697 355 1107 400 1005 493 320 533H48z" />
          <path fill="#ee3031" d="M48 528H312L318 543 455 554 150 617 133 635 240 662 305 675 325 690 545 735 690 748 795 768 857 800 265 838 197 855 355 875 172 908 192 920 112 945 85 962 110 978 335 1010V1022L188 1035 192 1048 165 1065 112 1077 180 1098 88 1110 108 1127 90 1140 92 1150 65 1165 50 1215 48 1305z" />
          <path d="M48 443H1040" stroke="#8ab38e" strokeWidth="5" strokeDasharray="26 19" />
          <path d="M1040 447H1283" stroke="#dcb846" strokeWidth="6" strokeDasharray="26 19" />
        </g>
        <Label end x={1064} y={704} w={59} size={29} fill="#959595">8.82</Label>
        <Label end x={1064} y={795.500} w={46} size={29} fill="#959595">7.61</Label>
        <Label end x={1064} y={906} w={39} size={29} fill="#959595">6.4</Label>
        <Label end x={1064} y={1018} w={50} size={29} fill="#959595">5.19</Label>
        <Label end x={1064} y={1110.500} w={55} size={29} fill="#959595">3.98</Label>
        <path d="M655 1125h414" stroke="#ebebeb" strokeWidth="2" />
      </svg>
      <div className="ml-[10px] mr-[11px] flex flex-1 flex-col">
        <div className="mt-[10px] flex h-[73px] justify-between">
          <div className="flex w-[187px] items-center justify-center rounded-[5px] bg-[#ffe8ed]">
            <Fit w={146} className="text-[36px] font-medium text-[#d8283d]">全部筹码</Fit>
          </div>
          <div className="relative flex w-[189px] items-center rounded-[5px] bg-[#f5f5f5]">
            <Fit w={146} className="ml-[21px] text-[36px] text-[#555]">主力筹码</Fit>
            <div className="absolute right-0 top-0 flex h-[31px] w-[42px] items-center justify-center rounded-tr-[5px] bg-[#dc800c]">
              <svg className="h-[25px] w-[24px]" viewBox="0 0 24 25" fill="none" stroke="#ffe5bd" strokeWidth="2.2">
                <rect x="1.500" y="8" width="21" height="15.500" rx="2" /><path d="M7 8V4.500q0-3 3-3h4q3 0 3 3V8M12 13v5" />
              </svg>
            </div>
          </div>
        </div>
        <div className="mt-[15px]">
          <InfoRow a="收盘获利" aw={134} b="34.90%" bw={104} c="text-[#d9293f]" d="text-[#d43145]" />
          <InfoRow a="平均成本" aw={134} b="7.36" bw={60} c="text-[#f19a16]" d="text-[#e9a22a]" />
        </div>
        <div className="mt-[16px] flex h-[73px] shrink-0 rounded-[6px] bg-[#f5f5f5] p-[3px]">
          <div className="flex w-[191px] items-center justify-center rounded-[5px] bg-white">
            <Fit w={139} className="text-[35px] text-[#222]">90%筹码</Fit>
          </div>
          <div className="flex flex-1 items-center justify-center">
            <Fit w={135} className="text-[35px] text-[#999]">70%筹码</Fit>
          </div>
        </div>
        <div className="mt-[14px]">
          <InfoRow a="价格区间" aw={134} b="5.32 − 8.24" bw={152} c="text-[#999]" d="text-[#222]" />
          <InfoRow a="集中度" aw={101} b="21.53%" bw={105} c="text-[#999]" d="text-[#222]" />
          <div className="flex h-[64px] items-center">
            <Fit w={202} className="text-[33px] text-[#999]">筹码分布说明</Fit>
            <svg className="ml-[10px] h-[28px] w-[28px]" viewBox="0 0 28 28" fill="none" stroke="#999" strokeWidth="2">
              <circle cx="14" cy="14" r="12.500" /><path d="M10 11.500q0-4.500 4-4.500t4 3.500q0 2-2 3.500t-2 3M14 19v2.500" />
            </svg>
          </div>
        </div>
        <div className="mb-[5px] mt-auto flex h-[68px] justify-between pl-[1px] pr-[2px]">
          <div className="flex w-[202px] items-center rounded-[5px] bg-[#eceefd]">
            <svg className="ml-[11px] h-[34px] w-[34px]" viewBox="0 0 34 34" stroke="#4863e0" strokeWidth="4">
              <path d="M0 3h17M0 10h25M0 17h33M0 24h25M0 31h17" />
            </svg>
            <Fit w={134} className="ml-[10px] text-[33px] text-[#4062d8]">筹码选股</Fit>
          </div>
          <div className="flex w-[97px] items-center justify-center rounded-[5px] bg-[#f5f5f5]">
            <Fit w={70} className="text-[36px] text-[#555]">关闭</Fit>
          </div>
        </div>
      </div>
    </aside>
  );
}

function BottomTabs() {
  const t = "mt-[38px] text-[45px] text-[#666]";
  return (
    <nav className="flex h-[71px] shrink-0 items-start overflow-hidden">
      <svg className="ml-[58px] mt-[43px] h-[36px] w-[43px] shrink-0" viewBox="0 0 43 36">
        <path d="M10 0h23l9 15-16 20h-9L1 15z" fill="#d9b27c" /><path d="M14 10h15" stroke="white" strokeWidth="3" />
      </svg>
      <Fit w={202} className="ml-[33px] mt-[36px] text-[50px] font-bold italic text-[#8a8a8a]">Level−2</Fit>
      <Fit w={89} className={"ml-[71px] " + t}>看点</Fit>
      <Fit w={99} className="ml-[66px] mt-[35px] text-[49px] font-bold text-[#2a2a2a]">资讯</Fit>
      <Fit w={90} className={"ml-[66px] " + t}>盘口</Fit>
      <Fit w={90} className={"ml-[70px] " + t}>资金</Fit>
      <Fit w={44} className="ml-[71px] mt-[38px] text-[45px] text-[#c9c9c9]">社</Fit>
    </nav>
  );
}

export default function App() {
  return (
    <div className="flex h-[2079px] w-[1080px] flex-col overflow-hidden bg-white font-[Roboto,'Noto_Sans_CJK_SC',sans-serif]">
      <Header />
      <Quote />
      <News />
      <div className="h-[12px] shrink-0 bg-[#f5f5f5]" />
      <Tabs />
      <Averages />
      <main className="flex h-[1330px] shrink-0">
        <div className="ml-[12px] flex w-[628px] flex-col gap-[15px]">
          <PriceChart />
          <Indicators />
        </div>
        <div className="ml-[15px]"><Chips /></div>
      </main>
      <div className="h-[10px] shrink-0 bg-[#f5f5f5]" />
      <BottomTabs />
    </div>
  );
}
